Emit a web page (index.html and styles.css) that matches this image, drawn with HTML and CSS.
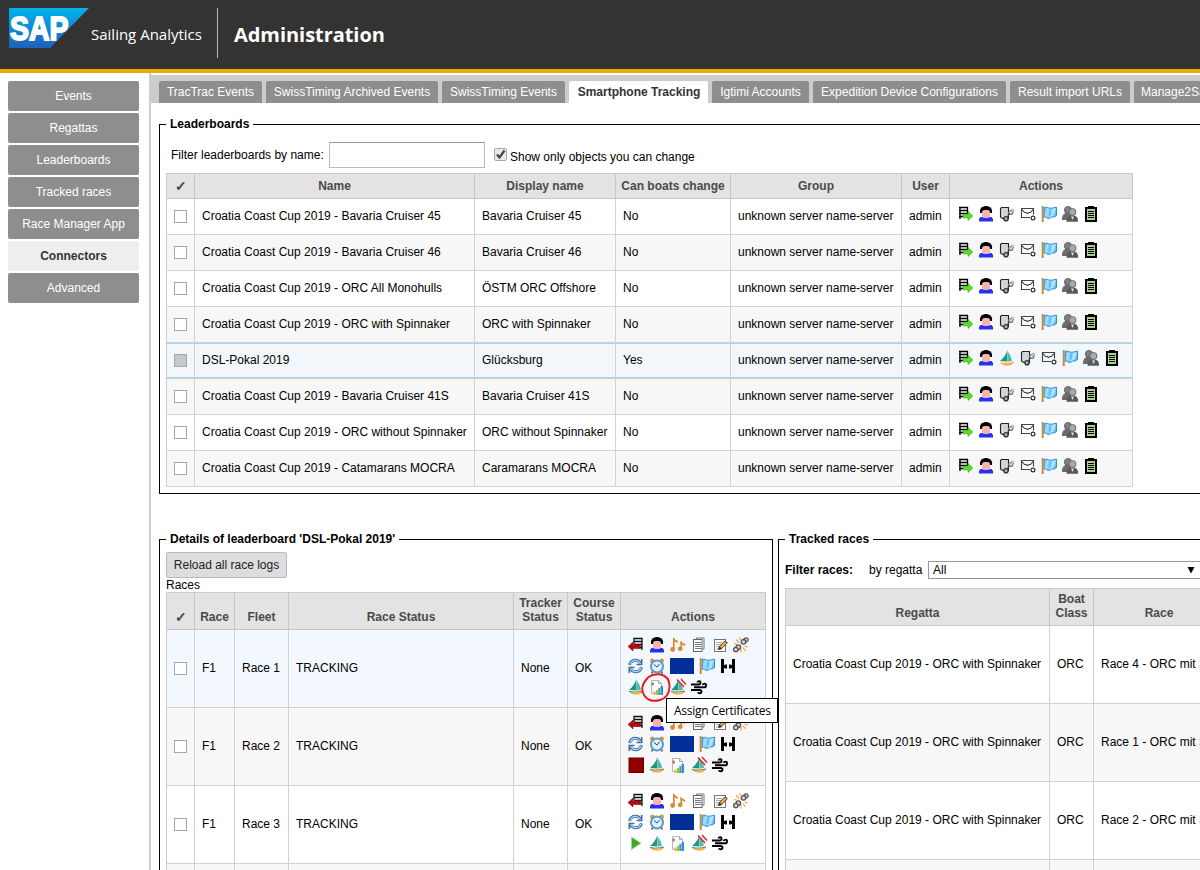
FILE: index.html
```html
<!DOCTYPE html>
<html lang="en">
<head>
<meta charset="utf-8">
<title>Administration - Sailing Analytics</title>
<link rel="stylesheet" href="styles.css">
</head>
<body>
<svg class="defs" aria-hidden="true">
  <defs>
    <linearGradient id="gsap" x1="0" y1="0" x2="0" y2="1"><stop offset="0" stop-color="#00b2ee"/><stop offset="1" stop-color="#1d61bc"/></linearGradient>
    <linearGradient id="gflag" x1="0" y1="0" x2="1" y2=".3"><stop offset="0" stop-color="#4aaeea"/><stop offset=".3" stop-color="#a9defc"/><stop offset=".55" stop-color="#7fcbf8"/><stop offset=".8" stop-color="#c0e9ff"/><stop offset="1" stop-color="#5cbaf0"/></linearGradient>
    <g id="export"><path d="M2 1.500h9M2 4.500h9M2 7.500h8M2 10.500h6M3 1v12M10.500 1v7" stroke="#000" stroke-width="1.300" fill="none"/><path d="M6 8h5V5.300l4.800 4.700-4.800 4.500v-2.700H6z" fill="#5add23" stroke="#3a9a1c" stroke-width=".6"/></g>
    <g id="man"><path d="M0 15.500V13l1.500-2h11L14 13v2.500z" fill="#2430f4"/><path d="M1 7Q.5 3 3 1.300 5 0 7 0t4 1.300Q13.500 3 13 7z" fill="#000"/><rect x="3" y="4" width="8" height="8" rx="2.500" fill="#f9b3ae"/></g>
    <g id="device"><path d="M2.500 1.500h7v11H3.500l-2-1.500V2.500z" fill="#d4d4d4" stroke="#222" stroke-width="1.100"/><circle cx="11.800" cy="6.500" r="2" fill="#ddd" stroke="#777" stroke-width="1.200"/><circle cx="13.500" cy="4.500" r="1.300" fill="#eee" stroke="#888" stroke-width=".8"/><circle cx="7" cy="12.700" r="2.100" fill="#bbb" stroke="#333" stroke-width="1.400"/><path d="M8.500 10.500l2-3" stroke="#444" stroke-width="1.200"/></g>
    <g id="mail"><path d="M10 11.500H1.500v-9h12v6M2 3.500l2.500 3h1.500l1.500 1L9 6.500h1.500l2.500-3" fill="none" stroke="#444" stroke-width="1.100"/><circle cx="13" cy="12" r="1.900" fill="#fff" stroke="#333" stroke-width="1.200"/></g>
    <g id="flag"><path d="M1.700 0v16" stroke="#c68a3c" stroke-width="2"/><path d="M3.200 1.500q2.300-.8 4.300.3 1.500 1 4 .2l4-.8v8.300q-1.500 1.500-3.500 1.500-1.500-.5-2.500 1Q6.500 13 5.500 11.500q-1-.8-2.300-.3z" fill="url(#gflag)" stroke="#2a90da"/><path d="M9 4v5.500" stroke="#3a9fe4" stroke-width=".8"/></g>
    <g id="users"><circle cx="6" cy="4" r="3.600" fill="#808080" stroke="#555" stroke-width=".8"/><path d="M0 14Q-.3 6.500 6 6.500t5 7.500z" fill="#6b6b6b"/><path d="M4.500 15.800q0-6.500 6-6.500t5.500 6.500z" fill="#585858"/><circle cx="10.500" cy="6" r="3.500" fill="#aaa" stroke="#666" stroke-width=".9"/><path d="M9 10.500l1.600 3.500L12 10.500z" fill="#ddd"/></g>
    <g id="clip"><path d="M2 1h3V0h6v1h3v15H2z" fill="#000"/><rect x="4" y="3" width="8" height="11" fill="#a9d18e"/><path d="M5 5.500h6M5 7.500h6M5 9.500h6M5 11.500h6" stroke="#000"/></g>
    <g id="boat"><path d="M8.500 0v11.500L1 11Q6.500 6.500 8.500 0z" fill="#1d9683"/><path d="M9 2q3.500 4 4 9L9 11.500z" fill="#58b8a9"/><path d="M.8 12.200q7 1.500 14.500-.7-1.800 4.300-7 4.300T.8 12.200z" fill="#f5b350"/></g>
    <g id="boatd"><use href="#boat"/><path d="M.5 12q7 1.500 14.500-.6l-.7 1.300Q7 13.500 1.300 13z" fill="#297e75"/></g>
    <g id="import"><path d="M5.500 1.500h9M5.500 4.500h9M6 7.500h8.500M9 10.500h5.500M14 1v12M6 1v6" stroke="#111" stroke-width="1.300"/><path d="M0 9.500L5 5v2.700h7.500v3.800H5V14z" fill="#b30b15" stroke="#7c0008" stroke-width=".5"/></g>
    <g id="music"><path d="M3.800 12V1M11.300 12V4.500" stroke="#d58b38" stroke-width="1.700"/><path d="M3 0l1.500 2L8 4 7 6.500 6 5 3 4zM10.500 4l1.500 1.500 3.500 1.500-1 2.500-1-1.500-3-1z" fill="#d58b38"/><circle cx="2.600" cy="12.500" r="2.400" fill="#d58b38"/><circle cx="10.200" cy="11.800" r="2.400" fill="#d58b38"/></g>
    <g id="copy"><path d="M5.500 2V1h7.500v11h-2" fill="none" stroke="#777"/><rect x="2.500" y="2.500" width="8.500" height="12" fill="#fff" stroke="#666"/><path d="M4 5.500h6M4 7.500h6M4 9.500h6M4 11.500h6" stroke="#777"/></g>
    <g id="edit"><rect x="2.500" y="2.500" width="11" height="12" fill="#fff" stroke="#777"/><path d="M4 5.500h6M4 7.500h5M4 9.500h4M4 12h6" stroke="#aaa"/><path d="M8 11l6.500-6.500" stroke="#5f4424" stroke-width="3.800"/><path d="M8.700 10.300l5-5" stroke="#efb548" stroke-width="2"/><path d="M6 13l1-3.500 2.500 2.500z" fill="#222"/></g>
    <g id="unlink"><g fill="#d5d5d5" stroke="#555" stroke-width="1.300"><circle cx="13" cy="2.900" r="2.100"/><circle cx="10.500" cy="4.800" r="2.300"/><circle cx="5.300" cy="10.200" r="2.300"/><circle cx="2.800" cy="12.500" r="2.200"/></g><path d="M7 0v3M3 2.500l3 3M1 6.500l3 .5M10 10.500l2.500 3.500M11.500 9l3.500 1M8 12v3.500" stroke="#f3a23c" stroke-width="1.200"/></g>
    <g id="refresh" fill="none" stroke="#3a70ac" stroke-width="3"><path d="M1.500 7Q3 2.200 7.500 2.200q3 0 5 2.800M13.500 9.200Q12 13.800 7.500 13.800q-3 0-5-2.800"/><path d="M13.700 1v5.500H8.500M1.300 15V9.500h5.200" stroke-width="1.600"/><path d="M2 6.500Q3.500 2.300 7.500 2.300q2.500 0 4.500 2.500M13 9.700q-1.500 4-5.500 4-2.500 0-4.500-2.500" stroke="#b4d6ee" stroke-width="1.200"/></g>
    <g id="clock"><path d="M4 13l-1.500 2.500M12 13l1.500 2.500" stroke="#666" stroke-width="1.500"/><circle cx="3.300" cy="2.800" r="2.300" fill="#d99a3b"/><circle cx="12.700" cy="2.800" r="2.300" fill="#d99a3b"/><circle cx="8" cy="8.500" r="6" fill="#dff0fb" stroke="#5b9ad0" stroke-width="2"/><path d="M5 6.500l3 2.500 2.500-3" fill="none" stroke="#444"/></g>
    <g id="finish" fill="#000"><path d="M1 1h3v14H1zM12 1h3v14h-3zM4 7h3v3H4zM9 7h3v3H9zM5.500 6h1v5h-1zM9.500 6h1v5h-1z"/></g>
    <g id="cert"><path d="M2.500 1.500h7l3 3v10h-10z" fill="#fbfbfb" stroke="#b5b5b5"/><path d="M9.500 1.500v3h3" fill="none" stroke="#aaa"/><path d="M2 5l1.700-2L5.400 5 3.700 7z" fill="#8c8c7a"/><path d="M4.500 12.500h2V16h-2z" fill="#e2b93b"/><path d="M7 11h2v5H7z" fill="#9bc04c"/><path d="M9.300 9h2v7h-2z" fill="#35a3a8"/><path d="M11.600 7h2.400v9h-2.400z" fill="#398bd0"/></g>
    <g id="boatx"><use href="#boatd"/><path d="M7 0h9v6.500l-2 1.500z" fill="#fff"/><path d="M7 .5l7 7.500M11 0l5 5.500" stroke="#d6262c" stroke-width="1.500"/></g>
    <g id="wind" fill="none" stroke="#000" stroke-width="1.900"><path d="M0 5.500h7.500q2 0 2-1.800T8 2.200 6.500 3.500M3 8.300h10q2 0 2-1.900t-1.600-1.800-1.600 1.300M0 11h8.500q2 0 2 1.600t-1.700 1.700-1.600-1.200"/></g>
    <g id="stop"><rect x="1" y="1" width="14.500" height="14.500" fill="#900000" stroke="#6d0000"/></g>
    <g id="play"><path d="M3.500 2l9.500 6.200L3.500 14.500z" fill="#43a829" stroke="#a6d89a"/></g>
    <g id="lbtail"><use href="#device"/><use href="#mail" x="21"/><use href="#flag" x="42"/><use href="#users" x="63"/><use href="#clip" x="84"/></g>
    <g id="lbicons"><use href="#export"/><use href="#man" x="22"/><use href="#lbtail" x="42"/></g>
    <g id="raceicons"><use href="#import"/><use href="#man" x="22"/><use href="#music" x="42"/><use href="#copy" x="63"/><use href="#edit" x="84"/><use href="#unlink" x="105"/><use href="#refresh" y="21"/><use href="#clock" x="21" y="21"/><rect x="42" y="21" width="24" height="16" fill="#002f97"/><use href="#flag" x="71" y="21"/><use href="#finish" x="92" y="21"/></g>
    <g id="sailicons"><use href="#boatd"/><use href="#cert" x="21"/><use href="#boatx" x="42"/><use href="#wind" x="63"/></g>
  </defs>
</svg>

<header class="top">
  <svg class="logo" width="81" height="41" viewBox="0 0 81 41"><path d="M0 0h80L41 40H0z" fill="url(#gsap)"/><text class="sap" x="1" y="31.500" textLength="58.500" lengthAdjust="spacingAndGlyphs">SAP</text></svg>
  <span class="product">Sailing Analytics</span>
  <h1>Administration</h1>
</header>

<div class="page">
  <nav class="side">
    <a>Events</a><a>Regattas</a><a>Leaderboards</a><a>Tracked races</a><a>Race Manager App</a><a class="on">Connectors</a><a>Advanced</a>
  </nav>
  <main>
    <div class="tabs">
      <a class="w103">TracTrac Events</a><a class="w172">SwissTiming Archived Events</a><a class="w123">SwissTiming Events</a><a class="w139 on">Smartphone Tracking</a><a class="w97">Igtimi Accounts</a><a class="w193">Expedition Device Configurations</a><a class="w120">Result import URLs</a><a class="w140">Manage2Sail</a>
    </div>

    <section class="panel boards">
      <h2>Leaderboards</h2>
      <div class="filter">
        <label>Filter leaderboards by name:</label><span class="input"></span>
        <svg class="checked" width="13" height="13" viewBox="0 0 13 13"><rect x=".5" y=".5" width="12" height="12" rx="1.500" fill="#e9e9e9" stroke="#aaa"/><path d="M3 6.500l2.500 3L10.500 2.500" fill="none" stroke="#444" stroke-width="2.200"/></svg>
        <span class="show">Show only objects you can change</span>
      </div>
      <table class="lb">
        <colgroup><col class="w28"><col class="w280"><col class="w141"><col class="w115"><col class="w171"><col class="w48"><col class="w183"></colgroup>
        <tr><th class="tick">✓</th><th>Name</th><th>Display name</th><th>Can boats change</th><th>Group</th><th>User</th><th>Actions</th></tr>
        <tr><td><i class="cb"></i></td><td>Croatia Coast Cup 2019 - Bavaria Cruiser 45</td><td>Bavaria Cruiser 45</td><td>No</td><td>unknown server name-server</td><td>admin</td><td><svg width="164" height="16"><use href="#lbicons"/></svg></td></tr>
        <tr><td><i class="cb"></i></td><td>Croatia Coast Cup 2019 - Bavaria Cruiser 46</td><td>Bavaria Cruiser 46</td><td>No</td><td>unknown server name-server</td><td>admin</td><td><svg width="164" height="16"><use href="#lbicons"/></svg></td></tr>
        <tr><td><i class="cb"></i></td><td>Croatia Coast Cup 2019 - ORC All Monohulls</td><td>ÖSTM ORC Offshore</td><td>No</td><td>unknown server name-server</td><td>admin</td><td><svg width="164" height="16"><use href="#lbicons"/></svg></td></tr>
        <tr><td><i class="cb"></i></td><td>Croatia Coast Cup 2019 - ORC with Spinnaker</td><td>ORC with Spinnaker</td><td>No</td><td>unknown server name-server</td><td>admin</td><td><svg width="164" height="16"><use href="#lbicons"/></svg></td></tr>
        <tr class="sel"><td><i class="cb full"></i></td><td>DSL-Pokal 2019</td><td>Glücksburg</td><td>Yes</td><td>unknown server name-server</td><td>admin</td><td><svg width="164" height="16"><use href="#export"/><use href="#man" x="22"/><use href="#boat" x="42"/><use href="#lbtail" x="63"/></svg></td></tr>
        <tr><td><i class="cb"></i></td><td>Croatia Coast Cup 2019 - Bavaria Cruiser 41S</td><td>Bavaria Cruiser 41S</td><td>No</td><td>unknown server name-server</td><td>admin</td><td><svg width="164" height="16"><use href="#lbicons"/></svg></td></tr>
        <tr><td><i class="cb"></i></td><td>Croatia Coast Cup 2019 - ORC without Spinnaker</td><td>ORC without Spinnaker</td><td>No</td><td>unknown server name-server</td><td>admin</td><td><svg width="164" height="16"><use href="#lbicons"/></svg></td></tr>
        <tr><td><i class="cb"></i></td><td>Croatia Coast Cup 2019 - Catamarans MOCRA</td><td>Caramarans MOCRA</td><td>No</td><td>unknown server name-server</td><td>admin</td><td><svg width="164" height="16"><use href="#lbicons"/></svg></td></tr>
      </table>
    </section>

    <div class="lower">
      <section class="panel details">
        <h2>Details of leaderboard 'DSL-Pokal 2019'</h2>
        <button>Reload all race logs</button>
        <div class="caption">Races</div>
        <table class="races">
          <colgroup><col class="w28"><col class="w40"><col class="w54"><col class="w225"><col class="w54"><col class="w53"><col class="w145"></colgroup>
          <tr><th class="tick">✓</th><th>Race</th><th>Fleet</th><th>Race Status</th><th>Tracker Status</th><th>Course Status</th><th>Actions</th></tr>
          <tr class="hover"><td><i class="cb"></i></td><td>F1</td><td>Race 1</td><td>TRACKING</td><td>None</td><td>OK</td><td><div class="acts"><svg width="122" height="58"><use href="#raceicons"/><use href="#sailicons" y="42"/></svg>
            <svg class="ring" width="32" height="30" viewBox="0 0 32 30"><path d="M7 4.500Q12 .8 19 1.300 29 3.500 28.500 14T19 27Q8 30 3 22T7 4.500z" fill="none" stroke="#f01414" stroke-width="1.900"/></svg>
            <span class="tip">Assign Certificates</span></div></td></tr>
          <tr class="even"><td><i class="cb"></i></td><td>F1</td><td>Race 2</td><td>TRACKING</td><td>None</td><td>OK</td><td><svg width="122" height="58"><use href="#raceicons"/><use href="#stop" y="42"/><use href="#sailicons" x="21" y="42"/></svg></td></tr>
          <tr><td><i class="cb"></i></td><td>F1</td><td>Race 3</td><td>TRACKING</td><td>None</td><td>OK</td><td><svg width="122" height="58"><use href="#raceicons"/><use href="#play" y="42"/><use href="#sailicons" x="21" y="42"/></svg></td></tr>
          <tr class="even"><td></td><td></td><td></td><td></td><td></td><td></td><td></td></tr>
        </table>
      </section>

      <section class="panel tracked">
        <h2>Tracked races</h2>
        <div class="filter2"><b>Filter races:</b><span>by regatta</span><div class="select"><span>All</span><svg width="8" height="7"><path d="M.5 0h7L4 6.500z"/></svg></div></div>
        <table class="tr">
          <colgroup><col class="w264"><col class="w44"><col class="w131"></colgroup>
          <tr><th>Regatta</th><th>Boat Class</th><th>Race</th></tr>
          <tr><td>Croatia Coast Cup 2019 - ORC with Spinnaker</td><td>ORC</td><td>Race 4 - ORC mit Spi</td></tr>
          <tr class="even"><td>Croatia Coast Cup 2019 - ORC with Spinnaker</td><td>ORC</td><td>Race 1 - ORC mit Spi</td></tr>
          <tr><td>Croatia Coast Cup 2019 - ORC with Spinnaker</td><td>ORC</td><td>Race 2 - ORC mit Spi</td></tr>
          <tr class="even"><td></td><td></td><td></td></tr>
        </table>
      </section>
    </div>
  </main>
</div>
</body>
</html>
```
FILE: styles.css
```css
* { box-sizing: border-box; }
html, body { margin: 0; width: 1200px; height: 870px; overflow: hidden; }
body { background: #fff; color: #000; font: 12px/14px "Liberation Sans", Arial, sans-serif; }
.defs { position: absolute; width: 0; height: 0; }
svg { display: block; flex: none; }

.top { display: flex; align-items: flex-start; height: 73px; padding: 8px 0 0 9px; background: #333; border-bottom: 4px solid #f0ab00; color: #fff; font-family: "Open Sans", sans-serif; white-space: nowrap; }
.sap { font: bold 33px "Liberation Sans", Arial, sans-serif; fill: #fff; stroke: #fff; stroke-width: 1.8px; }
.product { width: 128px; height: 50px; border-right: 1px solid #bbb; padding: 15px 0 0 1px; font-size: 15px; line-height: 22px; }
h1 { margin: 0; padding: 13px 0 0 16px; font-size: 20px; line-height: 28px; font-weight: 700; letter-spacing: -.05px; }

.page { display: flex; height: 797px; overflow: hidden; }
.side { width: 149px; flex: none; padding: 8px 10px 0 8px; display: flex; flex-direction: column; gap: 2px; }
.side a { height: 30px; line-height: 30px; text-align: center; background: #8e8e8e; color: #fff; border-radius: 2px; }
.side a.on { background: #eee; color: #333; font-weight: bold; }
main { width: 1051px; flex: none; border-left: 2px solid #ccc; overflow: hidden; }
.tabs { display: flex; gap: 4px; margin-top: 2px; padding: 6px 0 0 8px; height: 28px; background: #ccc; }
.tabs a { flex: none; height: 22px; line-height: 22px; text-align: center; background: #8e8e8e; color: #fff; border-radius: 2px 2px 0 0; white-space: nowrap; overflow: hidden; }
.tabs a.on { background: #fff; color: #333; font-weight: bold; padding-left: 1px; }
.tabs a:last-child { text-align: left; padding-left: 7px; }

.panel { border: 1px solid #000; padding: 0 6px; }
h2 { margin: -8px 0 0; width: max-content; padding: 0 4px; background: #fff; font-size: 12px; line-height: 15px; }
.boards { margin: 21px 0 0 8px; width: 1060px; height: 370px; }
.filter { display: flex; align-items: center; height: 26px; margin: 10px 0 5px; padding-left: 5px; }
.filter label { width: 158px; white-space: nowrap; }
.input { width: 156px; height: 26px; border: 1px solid #bbb; border-top-color: #999; margin-right: 9px; }
.filter .checked { margin: 0 3px 2px 0; }
.show { padding-top: 3px; }

table { table-layout: fixed; border-collapse: separate; border-spacing: 0; border-left: 1px solid #ccc; border-top: 1px solid #ccc; }
th, td { border-right: 1px solid #d2d2d2; border-bottom: 1px solid #d2d2d2; white-space: nowrap; }
td { padding: 0 0 0 7px; text-align: left; vertical-align: middle; overflow: hidden; }
th { padding: 0; background: #e3e3e3; color: #4b4a4a; text-align: center; border-color: #c6c6c6; }
th.tick { font-size: 14px; }
td svg { margin-bottom: 5px; }
.cb { display: block; width: 13px; height: 13px; border: 1px solid #a6a6a6; background: #fff; }
.cb.full { background: #c8c8c8; }
.lb { width: 967px; }
.lb th { height: 25px; }
.lb td { height: 36px; padding-bottom: 1px; }
.lb tr:nth-child(odd) td, .even td { background: #f7f7f7; }
.lb tr.sel td { background: #f1f7fb; box-shadow: inset 0 1px #a5d4ef, inset 0 -1px #a5d4ef; }

.lower { display: flex; gap: 5px; margin: 45px 0 0 8px; }
.details { width: 614px; height: 420px; flex: none; }
button { display: block; width: 121px; height: 26px; margin: 5px 0 0; padding: 0; border: 1px solid #bbb; border-radius: 2px; background: #ddd; color: #222; font: inherit; }
.caption { height: 14px; }
.races { width: 600px; }
.races th, .tr th { height: 37px; vertical-align: bottom; padding: 0 4px 5px; white-space: normal; }
.races td, .tr td { height: 78px; padding-bottom: 1px; }
.hover td { background: #f2f8fd; }
.races td:last-child { overflow: visible; }
.acts { position: relative; }
.ring { position: absolute; left: 13px; top: 36px; }
.tip { position: absolute; z-index: 2; left: 38px; top: 61px; width: 112px; height: 25px; border: 1px solid #000; background: #fff; padding-left: 7px; font: 12px/24px "Open Sans", sans-serif; letter-spacing: -.27px; }

.tracked { width: 480px; height: 420px; flex: none; }
.filter2 { display: flex; align-items: center; height: 18px; margin: 14px 0 9px; white-space: nowrap; }
.filter2 b { width: 84px; }
.filter2 > span { width: 59px; }
.select { width: 275px; height: 18px; border: 1px solid #999; display: flex; align-items: center; padding: 0 4px; }
.select span { width: 254px; }
.tr { width: 440px; }

.w28 { width: 28px; } .w40 { width: 40px; } .w44 { width: 44px; } .w48 { width: 48px; }
.w53 { width: 53px; } .w54 { width: 54px; } .w97 { width: 97px; } .w103 { width: 103px; }
.w115 { width: 115px; } .w120 { width: 120px; } .w123 { width: 123px; } .w131 { width: 131px; }
.w139 { width: 139px; } .w140 { width: 140px; } .w141 { width: 141px; } .w145 { width: 145px; }
.w171 { width: 171px; } .w172 { width: 172px; } .w183 { width: 183px; } .w193 { width: 193px; }
.w225 { width: 225px; } .w264 { width: 264px; } .w280 { width: 280px; }
```
